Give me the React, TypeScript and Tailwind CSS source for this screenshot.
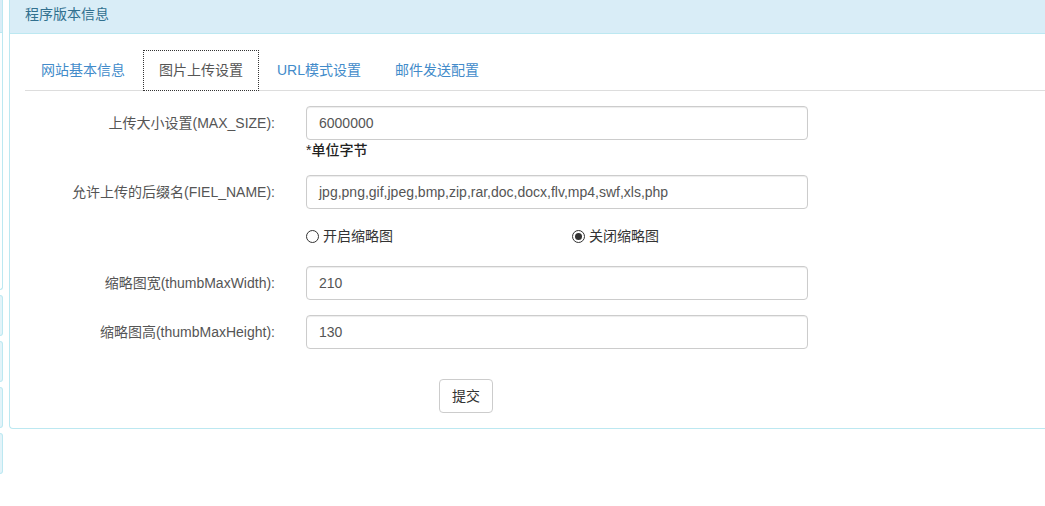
import React from 'react'

const font = { fontFamily: '"Liberation Sans", "Noto Sans CJK SC", Arial, sans-serif' }

function Radio({ checked, label }: { checked?: boolean; label: string }) {
  return (
    <span className="flex items-center gap-[4px] text-[14px] leading-[20px] text-[#333]">
      <span className="flex h-[13px] w-[13px] items-center justify-center rounded-full border border-[#333] bg-white">
        {checked && <span className="h-[7px] w-[7px] rounded-full bg-[#333]" />}
      </span>
      {label}
    </span>
  )
}

function Field({ label, value }: { label: string; value: string }) {
  return (
    <div className="flex items-center">
      <div className="flex h-[34px] w-[265px] items-center justify-end pr-[15px] text-[14px] text-[#555]">
        {label}
      </div>
      <div className="ml-[16px] flex h-[34px] w-[502px] items-center rounded-[4px] border border-[#ccc] bg-white px-[12px] text-[14px] text-[#555] shadow-[inset_0_1px_1px_rgba(0,0,0,0.075)]">
        {value}
      </div>
    </div>
  )
}

export default function App() {
  const tabs = ['网站基本信息', '图片上传设置', 'URL模式设置', '邮件发送配置']

  return (
    <div className="flex h-[506px] w-[1045px] overflow-hidden bg-white" style={font}>
      {/* clipped sidebar on the left */}
      <div className="flex w-[3px] shrink-0 flex-col">
        <div className="h-[290px] rounded-br-[4px] border-r border-b border-[#bce8f1]">
          <div className="h-[33px] border-b border-[#bce8f1] bg-[#d9edf7]" />
        </div>
        {[0, 1, 2, 3].map((i) => (
          <div
            key={i}
            className="mt-[5px] h-[41px] rounded-r-[4px] border border-l-0 border-[#bce8f1] bg-[#e3f3f9]"
          />
        ))}
      </div>

      {/* main panel */}
      <div className="ml-[6px] h-[429px] flex-1 rounded-bl-[4px] border-l border-b border-[#bce8f1]">
        <div className="h-[34px] border-b border-[#bce8f1] bg-[#d9edf7] pl-[15px] pt-[4px] text-[14px] leading-[20px] text-[#31708f]">
          程序版本信息
        </div>

        <div className="pl-[15px] pt-[16px]">
          <ul className="flex border-b border-[#ddd]">
            {tabs.map((t, i) => (
              <li key={t} className="mr-[2px] -mb-px">
                <span
                  className={
                    i === 1
                      ? 'block border border-dotted border-[#333] bg-white px-[15px] pt-[9px] pb-[10px] text-[14px] leading-[20px] text-[#555]'
                      : 'block border border-transparent px-[15px] pt-[9px] pb-[10px] text-[14px] leading-[20px] text-[#428bca]'
                  }
                >
                  {t}
                </span>
              </li>
            ))}
          </ul>

          <div className="mt-[15px] flex flex-col">
            <Field label="上传大小设置(MAX_SIZE):" value="6000000" />
            <div className="ml-[281px] text-[14px] font-medium leading-[20px] text-[#222]">
              *单位字节
            </div>

            <div className="mt-[15px]">
              <Field label="允许上传的后缀名(FIEL_NAME):" value="jpg,png,gif,jpeg,bmp,zip,rar,doc,docx,flv,mp4,swf,xls,php" />
            </div>

            <div className="mt-[15px] ml-[281px] flex h-[27px] items-start pt-[2px]">
              <div className="w-[266px]">
                <Radio label="开启缩略图" />
              </div>
              <div>
                <Radio checked label="关闭缩略图" />
              </div>
            </div>

            <div className="mt-[15px]">
              <Field label="缩略图宽(thumbMaxWidth):" value="210" />
            </div>
            <div className="mt-[15px]">
              <Field label="缩略图高(thumbMaxHeight):" value="130" />
            </div>

            <div className="mt-[30px] pl-[414px]">
              <button className="h-[34px] w-[54px] rounded-[4px] border border-[#ccc] bg-white text-[14px] text-[#333]">
                提交
              </button>
            </div>
          </div>
        </div>
      </div>
    </div>
  )
}
